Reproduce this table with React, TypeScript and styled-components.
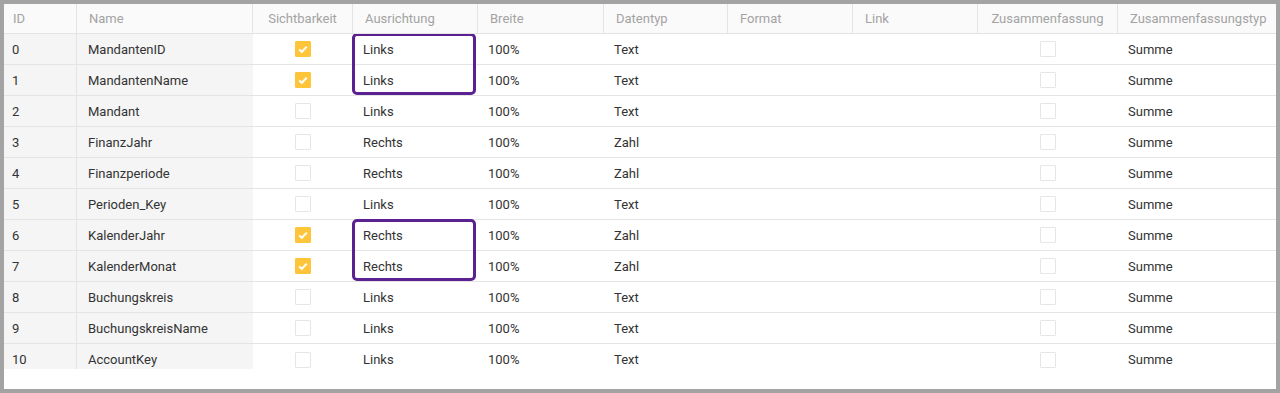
import React from 'react';
import styled, { createGlobalStyle } from 'styled-components';

const GlobalStyle = createGlobalStyle`
  html, body {
    margin: 0;
    padding: 0;
    background: #a3a3a3;
  }
  * {
    box-sizing: border-box;
  }
`

const COLS = '73px 176px 100px 125px 126px 124px 125px 125px 140px 1fr'

const Frame = styled.div`
  width: 1280px;
  height: 393px;
  padding: 4px;
`

const Panel = styled.div`
  background: #fff;
  height: 385px;
  font-family: Roboto, 'Liberation Sans', sans-serif;
  font-size: 13px;
`

const HeaderRow = styled.div`
  display: grid;
  grid-template-columns: ${COLS};
  height: 30px;
  background: #fafafa;
  border-bottom: 1px solid #e4e4e4;
`

const HeaderCell = styled.div<{ $center?: boolean; $first?: boolean; $last?: boolean }>`
  display: flex;
  align-items: center;
  justify-content: ${({ $center }) => ($center ? 'center' : 'flex-start')};
  padding: 0 ${({ $first }) => ($first ? '9px' : '12px')};
  color: #a3a3a3;
  border-right: ${({ $last }) => ($last ? 'none' : '1px solid #e4e4e4')};
  white-space: nowrap;
  overflow: hidden;
`

// scrolling body, the last row is cut off by it
const Body = styled.div`
  height: 335px;
  overflow: hidden;
`

const Row = styled.div<{ $last?: boolean }>`
  display: grid;
  grid-template-columns: ${COLS};
  height: 31px;
  border-bottom: ${({ $last }) => ($last ? 'none' : '1px solid #e4e4e4')};
`

const Cell = styled.div<{ $kind?: 'id' | 'name' | 'center' }>`
  position: relative;
  display: flex;
  align-items: center;
  justify-content: ${({ $kind }) => ($kind === 'center' ? 'center' : 'flex-start')};
  padding: 0 ${({ $kind }) => ($kind === 'id' ? '8px' : $kind === 'name' ? '11px' : '10px')};
  color: #333;
  white-space: nowrap;
  background: ${({ $kind }) => ($kind === 'id' || $kind === 'name' ? '#f5f5f5' : 'transparent')};
  border-right: ${({ $kind }) => ($kind === 'id' ? '1px solid #e4e4e4' : 'none')};
`

const Highlight = styled.div`
  position: absolute;
  top: -1px;
  left: -1px;
  width: 124px;
  height: 62px;
  border: 3px solid #5b2190;
  border-radius: 5px;
  pointer-events: none;
`

const Box = styled.span<{ $checked?: boolean }>`
  display: inline-flex;
  align-items: center;
  justify-content: center;
  width: 16px;
  height: 16px;
  border-radius: 1px;
  background: ${({ $checked }) => ($checked ? '#ffc53a' : '#fff')};
  border: 1px solid ${({ $checked }) => ($checked ? '#ffc53a' : '#e6e6e6')};
`

const Checkbox = ({ checked }: { checked?: boolean }) => (
  <Box $checked={checked}>
    {checked && (
      <svg width="12" height="12" viewBox="0 0 12 12">
        <path d="M2.2 6.4 L4.8 8.8 L9.8 3.6" fill="none" stroke="#fff" strokeWidth="2" />
      </svg>
    )}
  </Box>
)

type Item = { name: string; visible: boolean; align: string; type: string }

const items: Item[] = [
  { name: 'MandantenID', visible: true, align: 'Links', type: 'Text' },
  { name: 'MandantenName', visible: true, align: 'Links', type: 'Text' },
  { name: 'Mandant', visible: false, align: 'Links', type: 'Text' },
  { name: 'FinanzJahr', visible: false, align: 'Rechts', type: 'Zahl' },
  { name: 'Finanzperiode', visible: false, align: 'Rechts', type: 'Zahl' },
  { name: 'Perioden_Key', visible: false, align: 'Links', type: 'Text' },
  { name: 'KalenderJahr', visible: true, align: 'Rechts', type: 'Zahl' },
  { name: 'KalenderMonat', visible: true, align: 'Rechts', type: 'Zahl' },
  { name: 'Buchungskreis', visible: false, align: 'Links', type: 'Text' },
  { name: 'BuchungskreisName', visible: false, align: 'Links', type: 'Text' },
  { name: 'AccountKey', visible: false, align: 'Links', type: 'Text' },
]

// rows where the annotation box starts (covers two rows)
const highlightStart = [0, 6]

const headers = [
  'ID',
  'Name',
  'Sichtbarkeit',
  'Ausrichtung',
  'Breite',
  'Datentyp',
  'Format',
  'Link',
  'Zusammenfassung',
  'Zusammenfassungstyp',
]

export default function App() {
  return (
    <Frame>
      <GlobalStyle />
      <Panel>
        <HeaderRow>
          {headers.map((h, i) => (
            <HeaderCell
              key={h}
              $first={i === 0}
              $center={i === 2 || i === 8}
              $last={i === headers.length - 1}
            >
              {h}
            </HeaderCell>
          ))}
        </HeaderRow>
        <Body>
          {items.map((item, i) => (
            <Row key={item.name} $last={i === items.length - 1}>
              <Cell $kind="id">{i}</Cell>
              <Cell $kind="name">{item.name}</Cell>
              <Cell $kind="center">
                <Checkbox checked={item.visible} />
              </Cell>
              <Cell>
                {item.align}
                {highlightStart.includes(i) && <Highlight />}
              </Cell>
              <Cell>100%</Cell>
              <Cell>{item.type}</Cell>
              <Cell />
              <Cell />
              <Cell $kind="center">
                <Checkbox />
              </Cell>
              <Cell>Summe</Cell>
            </Row>
          ))}
        </Body>
      </Panel>
    </Frame>
  )
}
